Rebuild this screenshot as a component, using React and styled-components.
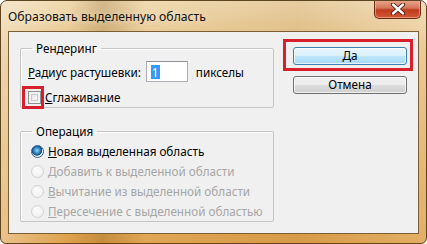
import styled, { createGlobalStyle } from "styled-components";

const Global = createGlobalStyle`
  html, body {
    margin: 0;
    padding: 0;
    background: #ffffff;
  }
  body {
    font-family: "Noto Sans", "Liberation Sans", sans-serif;
    font-size: 11.7px;
    color: #000;
  }
`;

const Window = styled.div`
  width: 427px;
  height: 244px;
  box-sizing: border-box;
  border: 1px solid #5e4522;
  border-radius: 7px 7px 6px 6px;
  background:
    linear-gradient(90deg, rgba(255,255,255,0.35) 0%, rgba(255,255,255,0) 16%, rgba(110,70,15,0.22) 24%, rgba(255,255,255,0.05) 34%, rgba(150,100,30,0.1) 70%, rgba(255,255,255,0.15) 100%),
    linear-gradient(180deg, #efd9b0 0%, #e6c185 20%, #e0b063 60%, #dea04a 100%);
  display: flex;
  flex-direction: column;
  overflow: hidden;
`;

const TitleBar = styled.div`
  height: 30px;
  display: flex;
  align-items: flex-start;
  padding-left: 7px;
  box-sizing: border-box;
`;

const Title = styled.div`
  flex: 1;
  padding-top: 7px;
  font-size: 12.2px;
  color: #111;
  text-shadow: 0 0 6px rgba(255,245,225,0.9);
`;

const CloseButton = styled.div`
  width: 47px;
  height: 19px;
  margin-right: 5px;
  margin-top: -1px;
  box-sizing: border-box;
  border: 1px solid #6e2a14;
  border-top: none;
  border-radius: 0 0 5px 5px;
  background: linear-gradient(180deg, #e9a98f 0%, #d4755a 45%, #c0391c 55%, #d25a36 100%);
  box-shadow: inset 0 0 0 1px rgba(255,200,180,0.5);
  display: flex;
  align-items: center;
  justify-content: center;
`;

const Client = styled.div`
  margin: 0 7px 9px 7px;
  flex: 1;
  border: 1px solid #7b5e33;
  background: #f0f0f0;
  display: flex;
  padding: 0 0 0 11px;
`;

const LeftCol = styled.div`
  width: 254px;
  display: flex;
  flex-direction: column;
  padding-top: 8px;
`;

const Group = styled.fieldset`
  margin: 0 0 ${(p) => p.$gap || 0}px 0;
  padding: ${(p) => p.$pad};
  border: 1px solid #c5c5c5;
  border-radius: 2px;
  box-shadow: inset 1px 1px 0 #fff;
  min-width: 0;
`;

const Legend = styled.legend`
  margin-left: 4px;
  padding: 0 4px;
  line-height: 16px;
  color: #000;
`;

const Row = styled.div`
  display: flex;
  align-items: center;
  height: ${(p) => p.$h || 20}px;
  color: ${(p) => (p.$disabled ? "#a6a6a6" : "#000")};
  white-space: nowrap;
`;

const Label = styled.span``;

const TextInput = styled.div`
  width: 42px;
  height: 21px;
  box-sizing: border-box;
  border: 1px solid #abadb3;
  border-top-color: #8e9399;
  background: #fff;
  margin: 0 8px 0 5px;
  padding: 2px 0 0 4px;
`;

const Selected = styled.span`
  display: inline-block;
  background: #3399ff;
  color: #fff;
  height: 14px;
  line-height: 14px;
  padding: 0 1px;
`;

const CheckBox = styled.span`
  position: relative;
  width: 13px;
  height: 13px;
  box-sizing: border-box;
  border: 1px solid #8e8f8f;
  background: linear-gradient(135deg, #dcdcdc 0%, #f4f4f4 60%, #ffffff 100%);
  box-shadow: inset 0 0 0 2px #f2f2f2, inset 0 0 0 3px #c9c9c9;
  margin-right: 4px;
  flex: none;

  &::after {
    content: "";
    position: absolute;
    left: -7px;
    top: -6px;
    right: -4px;
    bottom: -6px;
    border: 3px solid #d7202c;
  }
`;

const Radio = styled.span`
  width: 13px;
  height: 13px;
  box-sizing: border-box;
  border-radius: 50%;
  border: 1px solid ${(p) => (p.$disabled ? "#d2d2d2" : "#2c628b")};
  background: ${(p) =>
    p.$checked
      ? "radial-gradient(circle at 45% 40%, #9dd5f7 0%, #2d86c5 35%, #154a7a 55%, #f6f6f6 62%, #e2e2e2 100%)"
      : p.$disabled
      ? "radial-gradient(circle at 45% 40%, #fbfbfb 0%, #eeeeee 100%)"
      : "radial-gradient(circle at 45% 40%, #ffffff 0%, #dedede 100%)"};
  margin: 0 4px 0 3px;
  flex: none;
`;

const RightCol = styled.div`
  margin-left: 19px;
  padding-top: 15px;
  display: flex;
  flex-direction: column;
  gap: 11px;
`;

const Button = styled.div`
  position: relative;
  width: 114px;
  height: 18px;
  box-sizing: border-box;
  border: 1px solid ${(p) => (p.$default ? "#3c7fb1" : "#707070")};
  border-radius: 3px;
  background: ${(p) =>
    p.$default
      ? "linear-gradient(180deg, #eaf6fd 0%, #d9f0fc 50%, #bee6fd 51%, #a7d9f5 100%)"
      : "linear-gradient(180deg, #f2f2f2 0%, #ebebeb 50%, #dddddd 51%, #cfcfcf 100%)"};
  box-shadow: inset 0 0 0 1px rgba(255,255,255,0.7);
  display: flex;
  align-items: center;
  justify-content: center;
  line-height: 1;

  ${(p) =>
    p.$marked &&
    `
    &::after {
      content: "";
      position: absolute;
      left: -11px;
      top: -9px;
      right: -7px;
      bottom: -7px;
      border: 3px solid #d7202c;
    }
  `}
`;

const ops = [
  { u: "Н", rest: "овая выделенная область", checked: true },
  { u: "Д", rest: "обавить к выделенной области", disabled: true },
  { u: "В", rest: "ычитание из выделенной области", disabled: true },
  { u: "П", rest: "ересечение с выделенной областью", disabled: true },
];

export default function App() {
  return (
    <>
      <Global />
      <Window>
        <TitleBar>
          <Title>Образовать выделенную область</Title>
          <CloseButton>
            <svg width="16" height="12" viewBox="0 0 16 12">
              <path
                d="M3 1.5 L13 10.5 M13 1.5 L3 10.5"
                stroke="#4a1a0c"
                strokeWidth="4.2"
                strokeLinecap="round"
              />
              <path
                d="M3 1.5 L13 10.5 M13 1.5 L3 10.5"
                stroke="#ffffff"
                strokeWidth="2.4"
                strokeLinecap="round"
              />
            </svg>
          </CloseButton>
        </TitleBar>
        <Client>
          <LeftCol>
            <Group $pad="5px 7px 2px 7px" $gap={15}>
              <Legend>Рендеринг</Legend>
              <Row $h={21}>
                <Label>
                  <u>Р</u>адиус растушевки:
                </Label>
                <TextInput>
                  <Selected>1</Selected>
                </TextInput>
                <Label>пикселы</Label>
              </Row>
              <Row $h={16} style={{ marginTop: 7 }}>
                <CheckBox />
                <Label>
                  <u>С</u>глаживание
                </Label>
              </Row>
            </Group>
            <Group $pad="2px 7px 0 7px">
              <Legend>Операция</Legend>
              {ops.map((o) => (
                <Row key={o.u} $disabled={o.disabled}>
                  <Radio $checked={o.checked} $disabled={o.disabled} />
                  <Label>
                    <u>{o.u}</u>
                    {o.rest}
                  </Label>
                </Row>
              ))}
            </Group>
          </LeftCol>
          <RightCol>
            <Button $default $marked>
              Да
            </Button>
            <Button>Отмена</Button>
          </RightCol>
        </Client>
      </Window>
    </>
  );
}
